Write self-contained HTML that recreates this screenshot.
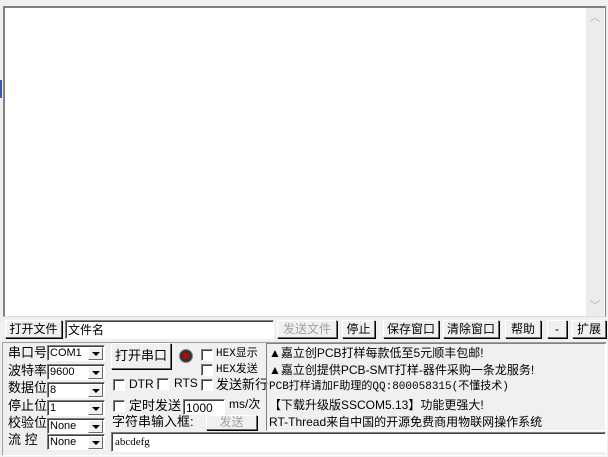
<!DOCTYPE html>
<html><head><meta charset="utf-8"><style>
*{margin:0;padding:0;box-sizing:border-box}
body{width:608px;height:457px;background:#f0f0f0;position:relative;overflow:hidden;font-family:"Liberation Sans","WenQuanYi Zen Hei","Noto Sans CJK SC",sans-serif;font-size:12px;color:#000}
.a{position:absolute;white-space:nowrap;line-height:14px}
.btn{position:absolute;background:#f0f0f0;border:1px solid;border-color:#fff #696969 #696969 #fff;box-shadow:1px 1px 0 #000;text-align:center;font-size:12px}
.in{position:absolute;background:#fff;border:1px solid;border-color:#808080 #fff #fff #808080;box-shadow:inset 1px 1px 0 #404040}
.cb{position:absolute;width:12px;height:12px;background:#fff;border:1px solid;border-color:#808080 #fff #fff #808080;box-shadow:inset 1px 1px 0 #404040}
.combo{position:absolute;left:47px;width:58px;height:16px;background:#fff;border:1px solid;border-color:#808080 #fff #fff #808080;box-shadow:inset 1px 1px 0 #404040;font-size:11px;padding-left:2px;line-height:14px}
.combo i{position:absolute;right:1px;top:1px;width:15px;height:13px;background:#f0f0f0;border:1px solid;border-color:#fff #696969 #696969 #fff}
.combo i:after{content:"";position:absolute;left:3px;top:4px;border:4px solid transparent;border-top:4px solid #000;border-bottom:0}
.m{font-family:"Liberation Mono","WenQuanYi Zen Hei",monospace;font-size:11px}
</style></head><body>
<div style="position:absolute;left:3px;top:6px;width:603px;height:311px;background:#fff;border-top:2px solid #808080;border-left:2px solid #808080;border-right:1px solid #808080;border-bottom:1px solid #ddd"></div>
<div style="position:absolute;left:586px;top:8px;width:18px;height:308px;background:#ececec"></div>
<div class="a" style="left:590px;top:12px;color:#aaa;font-size:10px">︿</div>
<div class="a" style="left:590px;top:300px;color:#aaa;font-size:10px">﹀</div>
<div style="position:absolute;left:0;top:80px;width:2px;height:18px;background:#3a58b0"></div>

<div class="btn" style="left:5px;top:320px;width:57px;height:18px;line-height:16px">打开文件</div>
<div class="in" style="left:65px;top:320px;width:209px;height:19px"><span class="a" style="left:2px;top:2px">文件名</span></div>
<div class="btn" style="left:277px;top:320px;width:60px;height:18px;line-height:16px;color:#a0a0a0">发送文件</div>
<div class="btn" style="left:342px;top:320px;width:33px;height:18px;line-height:16px">停止</div>
<div class="btn" style="left:383px;top:320px;width:56px;height:18px;line-height:16px">保存窗口</div>
<div class="btn" style="left:443px;top:320px;width:56px;height:18px;line-height:16px">清除窗口</div>
<div class="btn" style="left:505px;top:320px;width:36px;height:18px;line-height:16px">帮助</div>
<div class="btn" style="left:547px;top:320px;width:20px;height:18px;line-height:16px">-</div>
<div class="btn" style="left:572px;top:320px;width:34px;height:18px;line-height:16px">扩展</div>

<div style="position:absolute;left:2px;top:342px;width:605px;height:114px;border:1px solid;border-color:#a0a0a0 #fff #fff #a0a0a0"></div>

<div class="a" style="left:8px;top:346px;font-size:13px">串口号</div>
<div class="combo" style="top:345px">COM1<i></i></div>
<div class="a" style="left:8px;top:364px;font-size:13px">波特率</div>
<div class="combo" style="top:364px">9600<i></i></div>
<div class="a" style="left:8px;top:381px;font-size:13px">数据位</div>
<div class="combo" style="top:382px">8<i></i></div>
<div class="a" style="left:8px;top:399px;font-size:13px">停止位</div>
<div class="combo" style="top:400px">1<i></i></div>
<div class="a" style="left:8px;top:416px;font-size:13px">校验位</div>
<div class="combo" style="top:418px">None<i></i></div>
<div class="a" style="left:8px;top:433px;font-size:13px">流 控</div>
<div class="combo" style="top:434px">None<i></i></div>

<div class="btn" style="left:111px;top:343px;width:60px;height:26px;line-height:24px;font-size:13px">打开串口</div>
<div style="position:absolute;left:179px;top:349px;width:14px;height:14px;border-radius:50%;background:#333;border:1px solid #888"><div style="position:absolute;left:3px;top:3px;width:6px;height:6px;border-radius:50%;background:#c00"></div></div>
<div class="cb" style="left:201px;top:349px"></div><div class="a m" style="left:216px;top:347px">HEX显示</div>
<div class="cb" style="left:201px;top:364px"></div><div class="a m" style="left:216px;top:363px">HEX发送</div>
<div class="cb" style="left:113px;top:379px"></div><div class="a" style="left:129px;top:377px">DTR</div>
<div class="cb" style="left:157px;top:378px"></div><div class="a" style="left:174px;top:376px">RTS</div>
<div class="cb" style="left:201px;top:379px"></div><div class="a" style="left:216px;top:378px;font-size:13px">发送新行</div>
<div class="cb" style="left:113px;top:400px"></div><div class="a" style="left:129px;top:399px;font-size:13px">定时发送</div>
<div class="in" style="left:183px;top:399px;width:42px;height:16px"><span class="a" style="left:2px;top:1px">1000</span></div>
<div class="a" style="left:229px;top:397px">ms/次</div>
<div class="a" style="left:112px;top:415px;font-size:13px">字符串输入框:</div>
<div class="btn" style="left:206px;top:415px;width:51px;height:15px;line-height:13px;color:#a0a0a0">发送</div>
<div class="in" style="left:111px;top:432px;width:495px;height:20px"><span class="a" style="left:3px;top:2px;font-size:11px;font-family:'Liberation Serif',serif">abcdefg</span></div>

<div style="position:absolute;left:266px;top:343px;width:340px;height:88px;border:1px solid;border-color:#808080 #fff #fff #808080"></div>
<div class="a" style="left:269px;top:346px;font-size:12px">▲嘉立创PCB打样每款低至5元顺丰包邮!</div>
<div class="a" style="left:269px;top:363px;font-size:12px">▲嘉立创提供PCB-SMT打样-器件采购一条龙服务!</div>
<div class="a m" style="left:269px;top:380px">PCB打样请加F助理的QQ:800058315(不懂技术)</div>
<div class="a" style="left:269px;top:398px;font-size:12px">【下载升级版SSCOM5.13】功能更强大!</div>
<div class="a" style="left:269px;top:415px;font-size:12px">RT-Thread来自中国的开源免费商用物联网操作系统</div>
</body></html>
